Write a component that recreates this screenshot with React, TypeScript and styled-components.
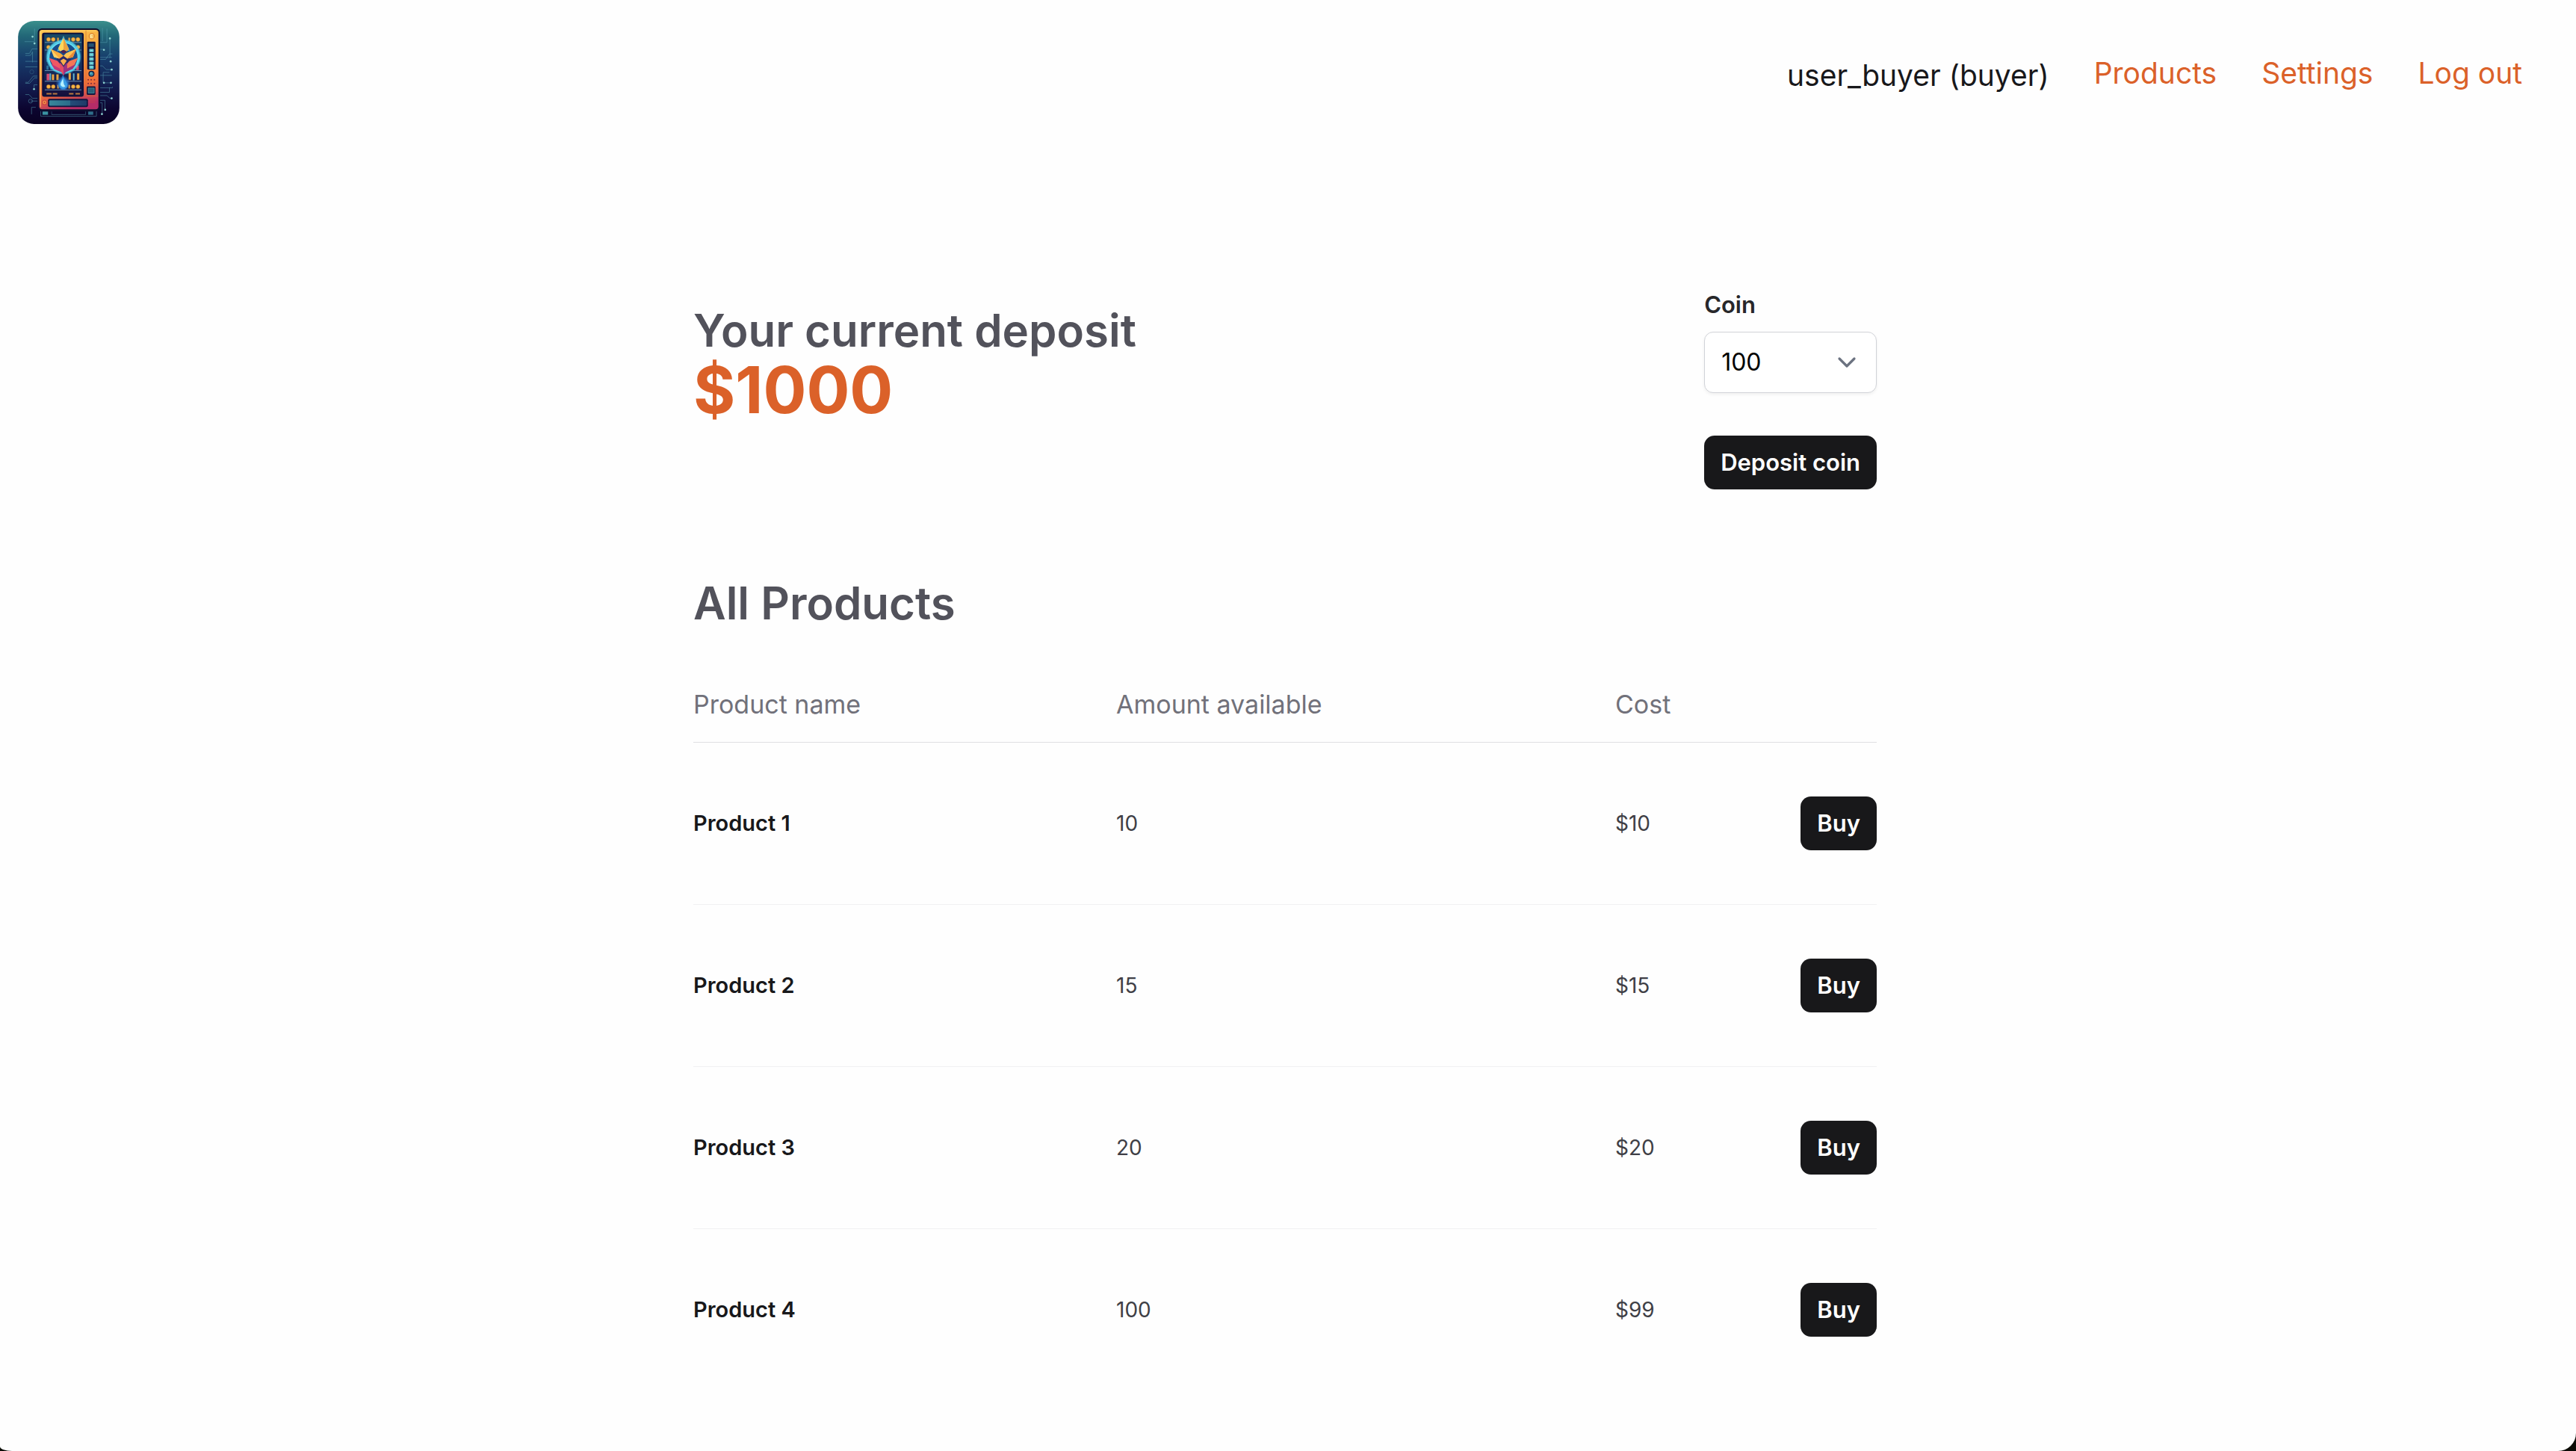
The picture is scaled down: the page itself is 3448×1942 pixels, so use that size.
import React from "react";
import styled, { createGlobalStyle } from "styled-components";

const GlobalStyle = createGlobalStyle`
  *, *::before, *::after { box-sizing: border-box; }
  body {
    margin: 0;
    background: #0b0c06;
    color: #18181b;
    font-family: Inter, "Noto Sans", sans-serif;
    -webkit-font-smoothing: antialiased;
  }
  button, select { font-family: inherit; }
  h1, h2, p { margin: 0; }
`;

const Page = styled.div`
  min-height: 100vh;
  background: #fefefe;
  border-radius: 0 0 24px 16px / 0 0 24px 6px;
`;

const Header = styled.header`
  display: flex;
  align-items: center;
  justify-content: space-between;
  padding: 28px 72px 28px 24px;
`;

const LogoLink = styled.a`
  display: block;
  line-height: 0;
`;

const Nav = styled.nav`
  display: flex;
  align-items: flex-start;
  gap: 60px;
  padding-top: 4px;
  font-size: 39px;
  line-height: 56px;
`;

const UserName = styled.span`
  padding-top: 3px;
`;

const NavLink = styled.a`
  color: #db6129;
  text-decoration: none;
`;

const Main = styled.main`
  width: 100%;
  max-width: 1592px;
  margin: 0 auto;
  padding: 190px 8px 72px 0;
`;

const DepositSection = styled.section`
  display: flex;
  align-items: flex-start;
  justify-content: space-between;
  margin-bottom: 112px;
`;

const Balance = styled.div`
  padding-top: 18px;
`;

const Heading = styled.h2`
  color: #52525b;
  font-size: 60px;
  font-weight: 600;
  line-height: 80px;
`;

const Amount = styled.p`
  color: #db6129;
  font-size: 86px;
  font-weight: 700;
  line-height: 80px;
`;

const DepositForm = styled.form`
  display: flex;
  flex-direction: column;
`;

const Label = styled.label`
  margin-bottom: 12px;
  color: #27272a;
  font-size: 31px;
  font-weight: 600;
  line-height: 48px;
`;

const SelectBox = styled.div`
  display: grid;
  align-items: center;
  margin-bottom: 57px;

  > * { grid-area: 1 / 1; }

  svg {
    justify-self: end;
    margin-right: 20px;
    pointer-events: none;
  }
`;

const Select = styled.select`
  width: 100%;
  height: 82px;
  padding: 0 22px;
  appearance: none;
  border: 1px solid #d1d3d8;
  border-radius: 12px;
  background: #ffffff;
  box-shadow: 0 2px 4px rgba(0, 0, 0, 0.06);
  color: #000000;
  font-size: 32px;
  line-height: 48px;
`;

const Button = styled.button`
  height: 72px;
  padding: 0 22px;
  border: 0;
  border-radius: 14px;
  background: #18181a;
  color: #ffffff;
  font-size: 31px;
  font-weight: 600;
  line-height: 48px;
  white-space: nowrap;
`;

const Table = styled.table`
  width: 100%;
  margin-top: 72px;
  border-collapse: separate;
  border-spacing: 0;
  text-align: left;
`;

const HeadCell = styled.th<{ $width?: number }>`
  width: ${(p) => (p.$width ? `${p.$width}px` : "auto")};
  padding: 0 0 26px;
  border-bottom: 1px solid #e0e0e2;
  color: #71717a;
  font-size: 34px;
  font-weight: 400;
  line-height: 48px;
`;

const Row = styled.tr`
  &:not(:last-child) > td { border-bottom: 1px solid #f1f1f2; }
`;

const Cell = styled.td<{ $strong?: boolean; $end?: boolean }>`
  padding: 72px 0;
  color: ${(p) => (p.$strong ? "#18181b" : "#3f3f46")};
  font-size: ${(p) => (p.$strong ? 29 : 28)}px;
  font-weight: ${(p) => (p.$strong ? 600 : 400)};
  line-height: 48px;
  text-align: ${(p) => (p.$end ? "right" : "left")};

  ${Button} { display: block; margin-left: auto; }
`;

const products = [
  { name: "Product 1", amount: 10, cost: 10 },
  { name: "Product 2", amount: 15, cost: 15 },
  { name: "Product 3", amount: 20, cost: 20 },
  { name: "Product 4", amount: 100, cost: 99 },
];

const circuits = [
  "M100 167H140V115", "M103 214H120L130 196H152", "M103 222H124L132 208V250M103 246H152",
  "M103 268H152", "M103 330H115L135 305H152", "M103 334H120L140 312H152M138 355V340H152",
  "M103 379H118L132 394H152", "M124 405H152M145 430H128V458", "M403 198H418M403 238H425L440 216H452",
  "M403 170H430V115M412 165V112M442 155V232", "M403 264H412L427 279H449", "M403 230H450",
  "M403 302H450M415 330V290H440M418 332H446", "M403 352H452V348M403 370H440V350",
  "M403 383H430L442 394H449", "M403 402H422V438M403 412H411V455", "M165 445V466H388V445M208 447V459H345V447",
];

const nodes = [
  [132, 147], [140, 174], [442, 154], [418, 200], [445, 246], [449, 279], [418, 332], [446, 332],
  [138, 357], [449, 394], [423, 440], [410, 457],
];

function CanRow({ y }: { y: number }) {
  return (
    <g>
      {[196, 215, 295, 314].map((x) => (
        <circle key={x} cx={x} cy={y} r="8" fill="#f5b544" stroke="#8a4a22" strokeWidth="1" />
      ))}
      <path d={`M234 ${y - 7}v15M279 ${y - 7}v15`} stroke="#d99a3f" strokeWidth="7" />
    </g>
  );
}

function Logo() {
  return (
    <svg width="136" height="138" viewBox="74 84 406 413" role="img" aria-label="Vending machine">
      <defs>
        <linearGradient id="sky" x1="0" y1="0" x2="0" y2="1">
          <stop offset="0" stopColor="#3a8f8c" />
          <stop offset="0.14" stopColor="#236878" />
          <stop offset="0.36" stopColor="#173d6c" />
          <stop offset="0.65" stopColor="#121a4c" />
          <stop offset="0.85" stopColor="#0c0530" />
          <stop offset="1" stopColor="#090122" />
        </linearGradient>
        <linearGradient id="cabinet" x1="0.3" y1="0" x2="0.5" y2="1">
          <stop offset="0" stopColor="#fcc14c" />
          <stop offset="0.4" stopColor="#f7a23e" />
          <stop offset="0.75" stopColor="#ef6d3b" />
          <stop offset="1" stopColor="#b52c68" />
        </linearGradient>
        <linearGradient id="glass" x1="0" y1="0" x2="0" y2="1">
          <stop offset="0" stopColor="#174a66" />
          <stop offset="0.5" stopColor="#153261" />
          <stop offset="1" stopColor="#160f3c" />
        </linearGradient>
        <linearGradient id="tray" x1="0" y1="0" x2="1" y2="0">
          <stop offset="0" stopColor="#38889b" />
          <stop offset="0.55" stopColor="#2b6d8a" />
          <stop offset="0.56" stopColor="#244d79" />
          <stop offset="1" stopColor="#1f3a68" />
        </linearGradient>
        <radialGradient id="halo">
          <stop offset="0" stopColor="#1d62a8" />
          <stop offset="0.75" stopColor="#2379bd" />
          <stop offset="0.9" stopColor="#5be0f5" />
          <stop offset="1" stopColor="#2f9ad0" stopOpacity="0" />
        </radialGradient>
        <radialGradient id="dropGlow">
          <stop offset="0" stopColor="#4db4f2" />
          <stop offset="0.6" stopColor="#2f7fd6" stopOpacity="0.7" />
          <stop offset="1" stopColor="#2f7fd6" stopOpacity="0" />
        </radialGradient>
      </defs>

      <rect x="74" y="84" width="406" height="413" rx="64" fill="url(#sky)" />

      <g fill="none" stroke="#5aa5b5" strokeWidth="2" opacity="0.75">
        {circuits.map((d) => (
          <path key={d} d={d} />
        ))}
        <circle cx="124" cy="405" r="8" />
        <circle cx="129" cy="288" r="8" opacity="0.5" />
      </g>
      {nodes.map(([x, y]) => (
        <circle key={`${x}-${y}`} cx={x} cy={y} r="4" fill="#8fd3d2" />
      ))}

      <rect x="169" y="440" width="38" height="22" rx="3" fill="#0b0a2e" />
      <rect x="346" y="440" width="38" height="22" rx="3" fill="#0b0a2e" />
      <rect x="172" y="447" width="22" height="13" fill="#3b93a3" />
      <rect x="355" y="447" width="20" height="13" fill="#2f6f8b" />

      <rect x="153" y="114" width="249" height="332" rx="16" fill="#0d0d2e" />
      <rect x="159" y="120" width="237" height="318" rx="11" fill="url(#cabinet)" />
      <path d="M164 430V132q0-8 8-8h215" fill="none" stroke="#ffdc73" strokeWidth="3" opacity="0.8" />
      <path d="M346 122V385M346 385h48" fill="none" stroke="#cf7031" strokeWidth="2" />

      <rect x="170" y="131" width="167" height="257" rx="9" fill="#10123b" />
      <rect x="179" y="137" width="151" height="244" fill="url(#glass)" />

      <CanRow y={158} />
      <CanRow y={189} />
      <path d="M188 240h132M188 271h132" stroke="#2b759d" strokeWidth="16" strokeDasharray="8 7" />
      <path d="M194 296v26M312 263v18" stroke="#d54b74" strokeWidth="11" />
      <path d="M214 298v23M232 298v23M281 292v28M315 294v26" stroke="#eaa542" strokeWidth="9" />
      <path d="M203 294v28M297 294v28" stroke="#65b6cf" strokeWidth="6" />
      <CanRow y={347} />
      <path d="M188 376h20M213 376h18M278 376h18M304 376h18" stroke="#b87840" strokeWidth="6" />
      <g stroke="#6a8dac" strokeWidth="3">
        <path d="M181 170h147M181 201h147M181 283h147M181 326h147M181 360h147" />
      </g>

      <circle cx="256" cy="228" r="72" fill="url(#halo)" opacity="0.9" />
      <circle cx="256" cy="229" r="59" fill="#194d8b" stroke="#61def3" strokeWidth="6" />
      <path d="M256 143 282 206 256 198 230 206Z" fill="#72e6f5" opacity="0.65" />
      <path d="M228 234 256 224 286 234 276 262 256 300 236 262Z" fill="#2c2a68" />

      <path d="M256 152 235 194 242 206 256 199Z" fill="#ffd65b" />
      <path d="M256 152 278 196 270 207 256 199Z" fill="#eda33d" />
      <path d="M244 207 256 201 269 207 257 216Z" fill="#51204e" />
      <path d="M205 196 246 215 256 224 240 235 218 229Z" fill="#f9ac3e" />
      <path d="M307 196 267 213 256 224 271 235 294 229Z" fill="#ffc455" />
      <path d="M205 196 218 229 240 235Z" fill="#ffd067" />
      <path d="M307 196 294 229 271 235Z" fill="#e98b38" />
      <path d="M198 232 232 244 249 265 253 282 217 269Z" fill="#ef5763" />
      <path d="M314 232 279 245 263 265 258 282 296 268Z" fill="#f47655" />
      <path d="M206 256 246 277 253 292 220 278Z" fill="#bf397a" />
      <path d="M307 256 266 277 260 292 293 276Z" fill="#9c317d" />
      <path d="M256 235 243 243 256 263 269 243Z" fill="#f9ac4d" />
      <path d="M242 250 256 268V304L242 277Z" fill="#e24b66" />
      <path d="M270 250 256 268V304L271 277Z" fill="#9b3182" />

      <circle cx="255" cy="334" r="30" fill="url(#dropGlow)" />
      <path d="M254 302C251 318 237 325 237 340a18 18 0 0 0 36 0C273 326 258 317 254 302Z" fill="#3a9de4" stroke="#286dc4" strokeWidth="3" />
      <path d="M254 312C252 323 244 329 244 339a11 11 0 0 0 20 5C257 343 256 330 254 312Z" fill="#b6f1ff" />

      <circle cx="369" cy="145" r="11" fill="#f6b84d" stroke="#d77f34" strokeWidth="3" />
      <path d="M374 139h-9v12h9M365 145h8" fill="none" stroke="#fff0b5" strokeWidth="3" />
      <rect x="351" y="167" width="33" height="112" rx="4" fill="#13173e" />
      <rect x="356" y="174" width="22" height="14" fill="#245274" />
      {[196, 213, 230, 247, 263].map((y) => (
        <g key={y}>
          <rect x="359" y={y} width="18" height="13" rx="2" fill="#5cc5d0" />
          <path d={`M364 ${y + 6}h8`} stroke="#c9f6ee" strokeWidth="2" />
        </g>
      ))}
      <circle cx="368" cy="296" r="12" fill="#14183d" />
      <circle cx="368" cy="296" r="8" fill="#368aa4" />
      <circle cx="366" cy="293" r="3" fill="#78ced3" />
      {[320, 335].map((y) =>
        [355, 367, 380].map((x) => <circle key={`${x}-${y}`} cx={x} cy={y} r="3" fill="#7c2b3d" />)
      )}
      <rect x="349" y="346" width="35" height="34" rx="4" fill="#15173d" />
      <rect x="355" y="353" width="24" height="20" fill="#296078" stroke="#4aa4ae" strokeWidth="2" />

      <circle cx="180" cy="410" r="9" fill="#f38b48" stroke="#c3443f" strokeWidth="3" />
      <circle cx="180" cy="410" r="3" fill="#c3443f" />
      <rect x="194" y="396" width="160" height="33" rx="6" fill="#111440" />
      <rect x="199" y="402" width="150" height="22" rx="3" fill="url(#tray)" />
      <path d="M359 397h25M359 404h25M359 411h25" stroke="#c23853" strokeWidth="3" />
    </svg>
  );
}

function Chevron() {
  return (
    <svg width="40" height="40" viewBox="0 0 20 20" fill="none" aria-hidden="true">
      <path d="m5 7.5 5 5 5-5" stroke="#6b7280" strokeWidth="1.6" strokeLinecap="round" strokeLinejoin="round" />
    </svg>
  );
}

export default function App() {
  return (
    <>
      <GlobalStyle />
      <Page>
        <Header>
          <LogoLink href="#">
            <Logo />
          </LogoLink>
          <Nav>
            <UserName>user_buyer (buyer)</UserName>
            <NavLink href="#products">Products</NavLink>
            <NavLink href="#settings">Settings</NavLink>
            <NavLink href="#logout">Log out</NavLink>
          </Nav>
        </Header>
        <Main>
          <DepositSection>
            <Balance>
              <Heading>Your current deposit</Heading>
              <Amount>$1000</Amount>
            </Balance>
            <DepositForm onSubmit={(e) => e.preventDefault()}>
              <Label htmlFor="coin">Coin</Label>
              <SelectBox>
                <Select id="coin" defaultValue="100">
                  <option>5</option>
                  <option>10</option>
                  <option>20</option>
                  <option>50</option>
                  <option>100</option>
                </Select>
                <Chevron />
              </SelectBox>
              <Button type="submit">Deposit coin</Button>
            </DepositForm>
          </DepositSection>
          <section id="products">
            <Heading>All Products</Heading>
            <Table>
              <thead>
                <tr>
                  <HeadCell $width={566}>Product name</HeadCell>
                  <HeadCell $width={668}>Amount available</HeadCell>
                  <HeadCell>Cost</HeadCell>
                  <HeadCell aria-label="Actions" />
                </tr>
              </thead>
              <tbody>
                {products.map((p) => (
                  <Row key={p.name}>
                    <Cell $strong>{p.name}</Cell>
                    <Cell>{p.amount}</Cell>
                    <Cell>${p.cost}</Cell>
                    <Cell $end>
                      <Button type="button">Buy</Button>
                    </Cell>
                  </Row>
                ))}
              </tbody>
            </Table>
          </section>
        </Main>
      </Page>
    </>
  );
}
